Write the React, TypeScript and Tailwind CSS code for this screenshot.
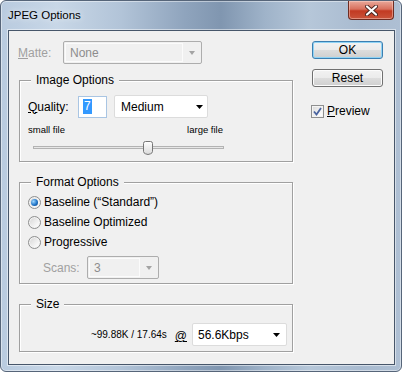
import React from 'react';

function Arrow({ color, w = 7 }: { color: string; w?: number }) {
  return (
    <svg width={w} height="4" viewBox={`0 0 ${w} 4`}>
      <path d={`M0 0H${w}L${w / 2} 4Z`} fill={color} />
    </svg>
  );
}

// greyed-out combo box (Matte, Scans)
function DisabledCombo({ value, className }: { value: string; className: string }) {
  return (
    <div className={`flex h-[23px] rounded-[2px] border border-[#adadad] bg-[#f0f0f0] p-[1px] ${className}`}>
      <div className="flex flex-1 items-center border border-[#fbfbfb] pl-[4px] text-[#8d8d8d]">{value}</div>
      <div className="flex w-[17px] items-center justify-center">
        <Arrow color="#a3a3a3" w={6} />
      </div>
    </div>
  );
}

function Combo({ value, className }: { value: string; className: string }) {
  return (
    <div className={`flex h-[23px] items-center justify-between rounded-[2px] border border-[#dcdcdc] bg-white ${className}`}>
      <span>{value}</span>
      <Arrow color="#000" />
    </div>
  );
}

function Radio({ checked }: { checked?: boolean }) {
  return (
    <span className="flex h-[13px] w-[13px] items-center justify-center rounded-full border border-[#8e8f8f] bg-[linear-gradient(135deg,#d4d4d4,#f6f6f6_70%,#ffffff)] shadow-[inset_0_0_0_1px_#f4f4f4]">
      {checked && (
        <span className="h-[7px] w-[7px] rounded-full bg-[radial-gradient(circle_at_35%_35%,#9fd8ff,#1f74c8_55%,#0d3f78)]" />
      )}
    </span>
  );
}

function Slider() {
  return (
    <svg width="191" height="14" viewBox="0 0 191 14" className="ml-[5px] block">
      <defs>
        <linearGradient id="thumb" x1="0" y1="0" x2="0" y2="1">
          <stop offset="0" stopColor="#ffffff" />
          <stop offset="1" stopColor="#dadada" />
        </linearGradient>
      </defs>
      <rect x="0.5" y="5.5" width="190" height="2" fill="#e7e7e7" stroke="#b3b3b3" />
      <path d="M110.5 2.5Q110.5 0.5 112.5 0.5H117.5Q119.5 0.5 119.5 2.5V10.5Q119.5 12 117.5 12.8L115 13.5L112.5 12.8Q110.5 12 110.5 10.5Z" fill="url(#thumb)" stroke="#767676" />
    </svg>
  );
}

const groupBox =
  'ml-[10px] w-[274px] border border-[#a0a0a0] shadow-[1px_1px_0_#ffffff,inset_1px_1px_0_#ffffff]';

export default function App() {
  return (
    <div className="h-[372px] w-[402px] bg-white font-['Liberation_Sans',Arial,sans-serif] text-[12px] text-black">
      <div className="flex h-full w-full flex-col rounded-[6px] border border-[#566579] bg-[linear-gradient(90deg,#b9cbdf_0%,#c8d7e7_14%,#b2c4d8_30%,#8fa4bd_46%,#8096b0_55%,#9fb3c9_66%,#b6c7d9_77%,#a9bbd0_90%,#aebfd3_100%)] shadow-[inset_0_0_0_1px_rgba(255,255,255,0.45)]">
        {/* title bar */}
        <div className="flex h-[29px] items-center pl-[7px]">
          <span className="text-[11.5px] [text-shadow:0_0_6px_rgba(255,255,255,0.9)]">JPEG Options</span>
          <div className="ml-auto mr-[7px] flex h-[19px] w-[46px] items-center justify-center self-start rounded-b-[4px] border border-t-0 border-[#6e2c22] bg-[linear-gradient(#e9a89a_0%,#d8705d_45%,#c23a22_55%,#c9533a_100%)] shadow-[inset_0_0_0_1px_rgba(255,220,210,0.45)]">
            <svg width="13" height="11" viewBox="0 0 13 11">
              <path d="M2 1.5L11 9.5M11 1.5L2 9.5" stroke="#4a2520" strokeWidth="4" strokeLinecap="round" />
              <path d="M2 1.5L11 9.5M11 1.5L2 9.5" stroke="#ffffff" strokeWidth="2.2" strokeLinecap="round" />
            </svg>
          </div>
        </div>

        {/* client area */}
        <div className="ml-[7px] flex h-[335px] w-[387px] border border-[#47566a] bg-[#f0f0f0] shadow-[0_0_0_1px_rgba(255,255,255,0.5)]">
          <div className="w-[302px] pt-[10px]">
            <div className="flex h-[23px] items-center pl-[9px]">
              <span className="w-[45px] text-[#a0a0a0]">
                <span className="underline">M</span>atte:
              </span>
              <DisabledCombo value="None" className="w-[139px]" />
            </div>

            <fieldset className={`${groupBox} mt-[9px] pb-[6px] pl-[8px] pt-[8px]`}>
              <legend className="ml-[3px] bg-[#f0f0f0] px-[5px] leading-[14px]">Image Options</legend>
              <div className="flex h-[23px] items-center">
                <span className="w-[50px]">
                  <span className="underline">Q</span>uality:
                </span>
                <div className="flex h-[22px] w-[29px] items-center border border-[#a9c5e3] bg-white pl-[4px]">
                  <span className="bg-[#3399ff] px-[1px] leading-[15px] text-white">7</span>
                </div>
                <Combo value="Medium" className="ml-[7px] w-[94px] pl-[6px] pr-[4px]" />
              </div>
              <div className="mt-[6px] flex w-[195px] justify-between text-[9.5px] leading-[12px]">
                <span>small file</span>
                <span>large file</span>
              </div>
              <div className="mt-[5px]">
                <Slider />
              </div>
            </fieldset>

            <fieldset className={`${groupBox} mt-[13px] pb-[4px] pl-[8px] pt-[3px]`}>
              <legend className="ml-[3px] bg-[#f0f0f0] px-[5px] leading-[14px]">Format Options</legend>
              <div className="flex h-[20px] items-center gap-[3px]">
                <Radio checked />
                <span>Baseline (“Standard”)</span>
              </div>
              <div className="flex h-[20px] items-center gap-[3px]">
                <Radio />
                <span>Baseline Optimized</span>
              </div>
              <div className="flex h-[20px] items-center gap-[3px]">
                <Radio />
                <span>Progressive</span>
              </div>
              <div className="mt-[4px] flex h-[23px] items-center pl-[15px]">
                <span className="w-[44px] text-[#a0a0a0]">Scans:</span>
                <DisabledCombo value="3" className="w-[72px]" />
              </div>
            </fieldset>

            <fieldset className={`${groupBox} mt-[13px] pb-[5px] pl-[8px] pr-[5px] pt-[12px]`}>
              <legend className="ml-[3px] bg-[#f0f0f0] px-[5px] leading-[14px]">Size</legend>
              <div className="flex h-[23px] items-center justify-end">
                <span className="text-[10px]">~99.88K / 17.64s</span>
                <span className="ml-[8px] mt-[3px] underline">@</span>
                <Combo value="56.6Kbps" className="ml-[5px] w-[95px] pl-[5px] pr-[6px]" />
              </div>
            </fieldset>
          </div>

          <div className="flex flex-col pt-[10px]">
            <button className="ml-[1px] h-[18px] w-[71px] rounded-[3px] border border-[#3c7fb1] bg-[linear-gradient(#f2f2f2_0%,#ebebeb_50%,#dddddd_51%,#cfcfcf_100%)] leading-[16px] shadow-[inset_0_0_0_1px_#8fd3f5]">
              OK
            </button>
            <button className="ml-[1px] mt-[10px] h-[18px] w-[71px] rounded-[3px] border border-[#707070] bg-[linear-gradient(#f2f2f2_0%,#ebebeb_50%,#dddddd_51%,#cfcfcf_100%)] leading-[16px] shadow-[inset_0_0_0_1px_#fcfcfc]">
              Reset
            </button>
            <div className="mt-[15px] flex items-center">
              <span className="flex h-[13px] w-[13px] items-center justify-center border border-[#8e8f8f] bg-[linear-gradient(135deg,#d9d9d9,#f7f7f7_70%,#ffffff)] shadow-[inset_0_0_0_1px_#f4f4f4]">
                <svg width="9" height="9" viewBox="0 0 9 9">
                  <path d="M1 4.5L3.5 7.5L8 1" fill="none" stroke="#4a64a0" strokeWidth="1.8" />
                </svg>
              </span>
              <span className="ml-[3px]">
                <span className="underline">P</span>review
              </span>
            </div>
          </div>
        </div>
      </div>
    </div>
  );
}
